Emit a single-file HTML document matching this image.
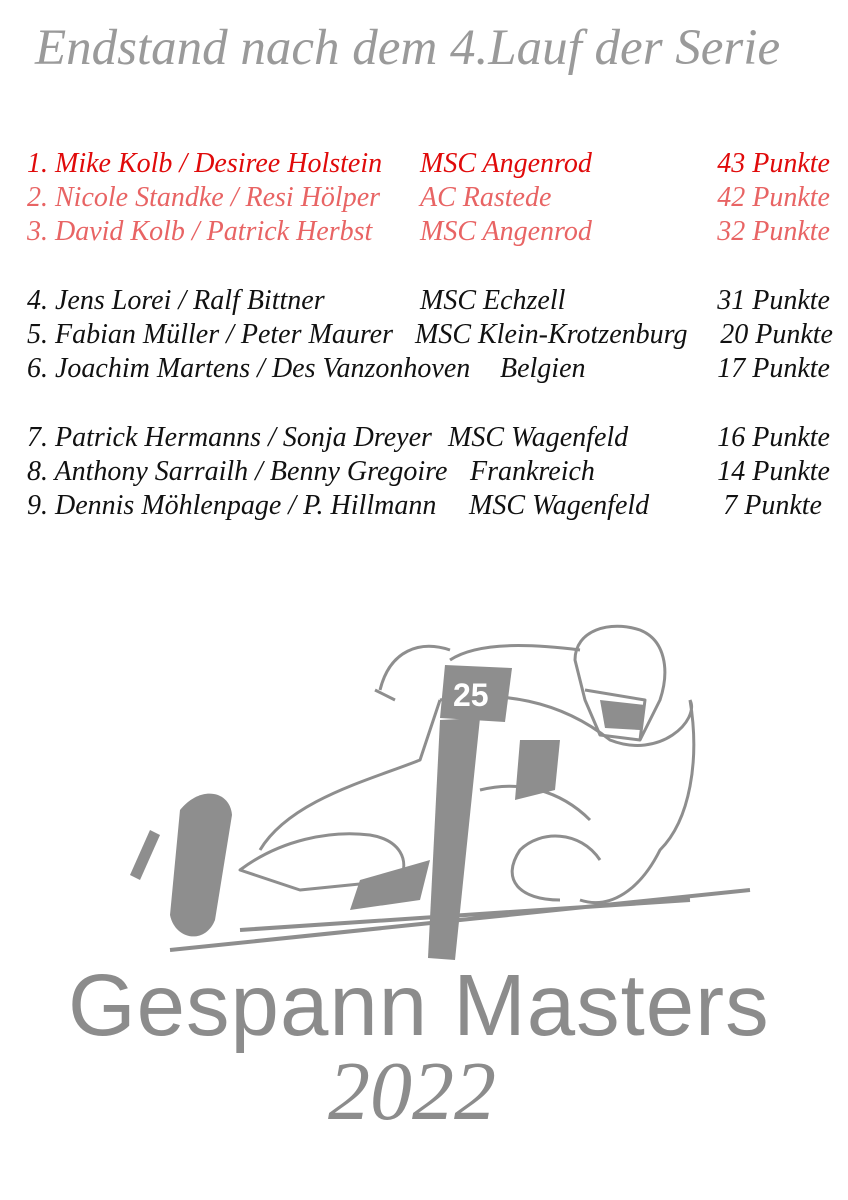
<!DOCTYPE html>
<html><head><meta charset="utf-8">
<style>
html,body{margin:0;padding:0;background:#fff;}
body{width:848px;height:1200px;position:relative;overflow:hidden;font-family:"Liberation Serif",serif;}
.t{position:absolute;font-style:italic;white-space:nowrap;line-height:1;}
.title{left:35px;top:23px;font-size:51px;color:#9a9a9a;}
.r{font-size:28px;}
.red1{color:#e00a0a}.red2{color:#e86464}.blk{color:#111}
.rt{text-align:right;right:18px;}
.logo{position:absolute;left:68px;top:962px;font-family:"Liberation Sans",sans-serif;font-size:87px;color:#8c8c8c;letter-spacing:1px;white-space:nowrap;line-height:1;}
.year{position:absolute;left:328px;top:1050px;font-size:84px;font-style:italic;color:#8c8c8c;line-height:1;}
</style></head><body>
<div class="t title">Endstand nach dem 4.Lauf der Serie</div>

<div class="t r red1" style="left:27px;top:150px">1. Mike Kolb / Desiree Holstein</div>
<div class="t r red1" style="left:420px;top:150px">MSC Angenrod</div>
<div class="t r red1 rt" style="top:150px">43 Punkte</div>

<div class="t r red2" style="left:27px;top:184px">2. Nicole Standke / Resi Hölper</div>
<div class="t r red2" style="left:420px;top:184px">AC Rastede</div>
<div class="t r red2 rt" style="top:184px">42 Punkte</div>

<div class="t r red2" style="left:27px;top:218px">3. David Kolb / Patrick Herbst</div>
<div class="t r red2" style="left:420px;top:218px">MSC Angenrod</div>
<div class="t r red2 rt" style="top:218px">32 Punkte</div>

<div class="t r blk" style="left:27px;top:287px">4. Jens Lorei / Ralf Bittner</div>
<div class="t r blk" style="left:420px;top:287px">MSC Echzell</div>
<div class="t r blk rt" style="top:287px">31 Punkte</div>

<div class="t r blk" style="left:27px;top:321px">5. Fabian Müller / Peter Maurer</div>
<div class="t r blk" style="left:415px;top:321px">MSC Klein-Krotzenburg</div>
<div class="t r blk rt" style="top:321px;right:15px">20 Punkte</div>

<div class="t r blk" style="left:27px;top:355px">6. Joachim Martens / Des Vanzonhoven</div>
<div class="t r blk" style="left:500px;top:355px">Belgien</div>
<div class="t r blk rt" style="top:355px">17 Punkte</div>

<div class="t r blk" style="left:27px;top:424px">7. Patrick Hermanns / Sonja Dreyer</div>
<div class="t r blk" style="left:448px;top:424px">MSC Wagenfeld</div>
<div class="t r blk rt" style="top:424px">16 Punkte</div>

<div class="t r blk" style="left:27px;top:458px">8. Anthony Sarrailh / Benny Gregoire</div>
<div class="t r blk" style="left:470px;top:458px">Frankreich</div>
<div class="t r blk rt" style="top:458px">14 Punkte</div>

<div class="t r blk" style="left:27px;top:492px">9. Dennis Möhlenpage / P. Hillmann</div>
<div class="t r blk" style="left:469px;top:492px">MSC Wagenfeld</div>
<div class="t r blk rt" style="top:492px;right:26px">7 Punkte</div>

<svg style="position:absolute;left:0;top:0" width="848" height="1200" viewBox="0 0 848 1200">
<g fill="none" stroke="#8e8e8e" stroke-width="3" stroke-linejoin="round">
<path d="M575 660 C575 630 610 620 640 630 C665 640 670 670 660 700 L640 740 L600 735 L585 700 Z"/>
<path d="M585 690 L645 700 L640 740"/>
<path d="M450 660 C480 640 540 645 580 650 M440 700 C500 690 560 700 610 740 C660 760 700 720 690 700 M690 700 C700 760 690 820 660 850 C640 890 610 910 580 900 M590 820 C560 790 520 780 480 790"/>
<path d="M600 860 C580 830 540 830 520 850 C500 880 520 900 560 900"/>
<path d="M240 870 C280 840 330 830 370 835 C400 840 410 860 400 880 L300 890 Z"/>
<path d="M260 850 C290 800 370 780 420 760 L440 700"/>
<path d="M380 690 C390 650 420 640 450 650 M375 690 L395 700"/>
<path d="M170 950 L750 890 M240 930 L690 900" stroke-width="4"/>
</g>
<g fill="#8e8e8e">
<path d="M440 720 L480 718 L455 960 L428 958 Z"/>
<path d="M445 665 L512 668 L505 722 L440 718 Z"/>
<path d="M180 810 C200 785 230 790 232 815 L215 920 C205 945 175 940 170 915 Z"/>
<path d="M520 740 L560 740 L555 790 L515 800 Z"/>
<path d="M600 700 L645 705 L640 730 L605 728 Z"/>
<path d="M360 880 L430 860 L420 900 L350 910 Z"/>
<path d="M150 830 L160 835 L140 880 L130 875 Z"/>
</g>
<text x="453" y="706" font-family="Liberation Sans,sans-serif" font-weight="bold" font-size="32" fill="#fff">25</text>
</svg>

<div class="logo">Gespann Masters</div>
<div class="year">2022</div>
</body></html>
